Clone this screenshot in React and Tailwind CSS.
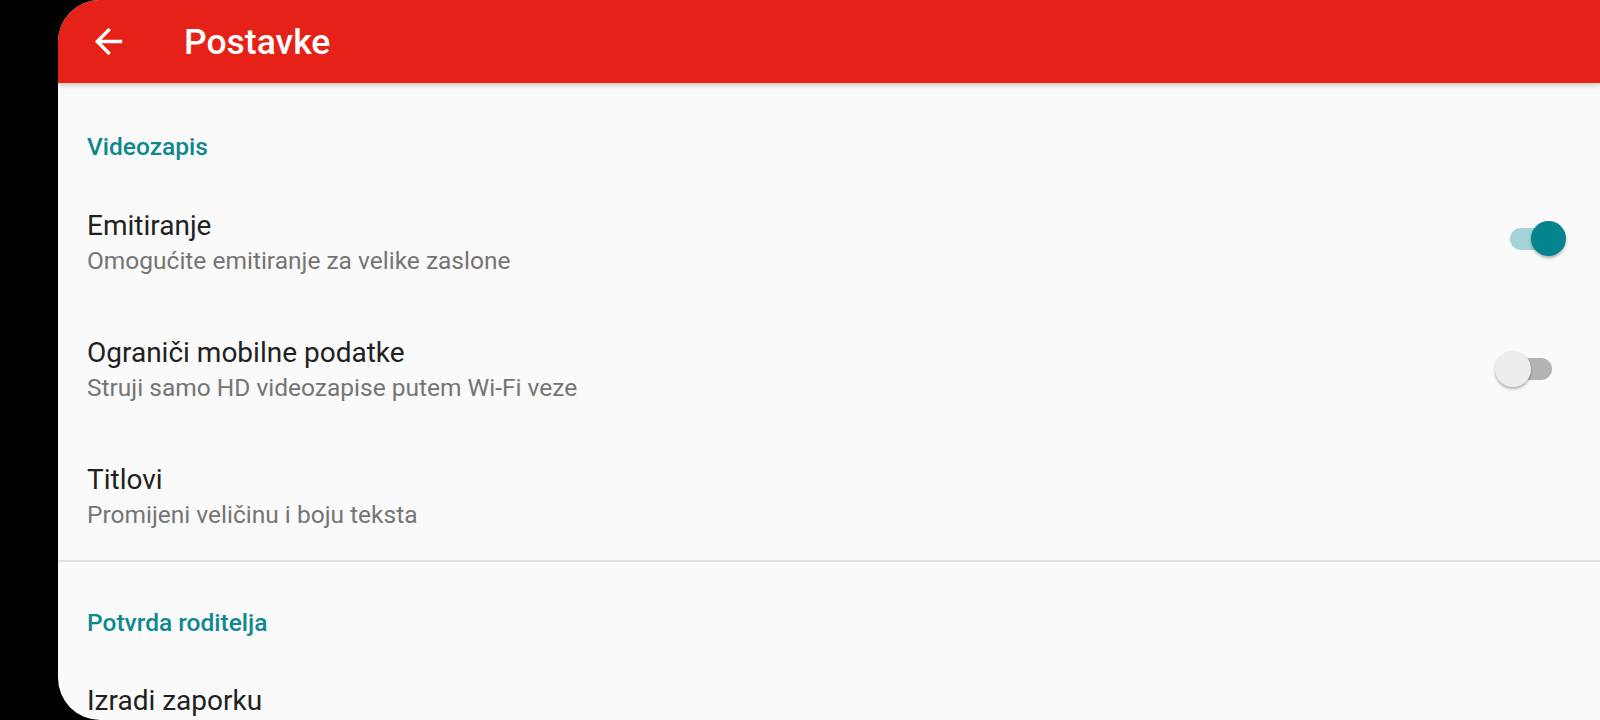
import React from "react";

const font = { fontFamily: "Roboto, 'Noto Sans', sans-serif" };

// ── Switch ─────────────────────────────
const Switch = ({ on, className = "" }) => {
  if (on) {
    return (
      <div className={`relative w-[56px] h-[36px] shrink-0 ${className}`}>
        <div className="absolute left-0 top-[7px] w-[52px] h-[22px] rounded-full bg-[#a4d3d8]" />
        <div className="absolute left-[21px] top-0 w-[35px] h-[35px] rounded-full bg-[#05838f] shadow-[0_2px_3px_rgba(0,0,0,0.3)]" />
      </div>
    );
  }
  return (
    <div className={`relative w-[57px] h-[36px] shrink-0 ${className}`}>
      <div className="absolute left-[5px] top-[7px] w-[52px] h-[22px] rounded-full bg-[#b3b3b3]" />
      <div className="absolute left-0 top-0 w-[36px] h-[36px] rounded-full bg-[#ededed] shadow-[0_2px_3px_rgba(0,0,0,0.3)]" />
    </div>
  );
};

const SectionHeader = ({ children, className = "" }) => (
  <div className={`pl-[29px] text-[24.5px] leading-[30px] font-medium text-[#0e8791] shrink-0 ${className}`}>{children}</div>
);

const Row = ({ title, subtitle, toggle }) => (
  <div className="h-[127px] pl-[29px] flex items-start justify-between shrink-0">
    <div className="pt-[31px] flex flex-col gap-[5px]">
      <p className="text-[28px] leading-[32px] text-[#212121]">{title}</p>
      {subtitle && <p className="text-[24.5px] leading-[28px] text-[#757575]">{subtitle}</p>}
    </div>
    {toggle}
  </div>
);

const App = () => {
  return (
    <div className="w-[1600px] h-[720px] bg-black flex overflow-hidden" style={font}>
      <div className="ml-[58px] flex-1 h-[720px] rounded-l-[42px] overflow-hidden bg-[#fafafa] flex flex-col">
        {/* ── Toolbar ───────────── */}
        <div className="h-[83px] shrink-0 bg-[#e62117] flex items-center relative z-10 shadow-[0_2px_5px_rgba(0,0,0,0.22)]">
          <svg width="41" height="41" viewBox="0 0 24 24" className="ml-[30px]" fill="#ffffff">
            <path d="M20 11H7.83l5.59-5.59L12 4l-8 8 8 8 1.41-1.41L7.83 13H20v-2z" />
          </svg>
          <h1 className="ml-[55px] text-[35.5px] leading-[40px] font-medium text-white">Postavke</h1>
        </div>

        {/* ── Videozapis ────────── */}
        <SectionHeader className="pt-[49px] pb-[17px]">Videozapis</SectionHeader>
        <Row
          title="Emitiranje"
          subtitle="Omogućite emitiranje za velike zaslone"
          toggle={<Switch on className="mr-[34px] mt-[42px]" />}
        />
        <Row
          title="Ograniči mobilne podatke"
          subtitle="Struji samo HD videozapise putem Wi-Fi veze"
          toggle={<Switch className="mr-[48px] mt-[45px]" />}
        />
        <Row title="Titlovi" subtitle="Promijeni veličinu i boju teksta" />
        <div className="h-[2px] shrink-0 bg-[#e2e2e2]" />

        {/* ── Potvrda roditelja ─── */}
        <SectionHeader className="pt-[46px] pb-[16px]">Potvrda roditelja</SectionHeader>
        <Row title="Izradi zaporku" />
      </div>
    </div>
  );
};

export default App;
